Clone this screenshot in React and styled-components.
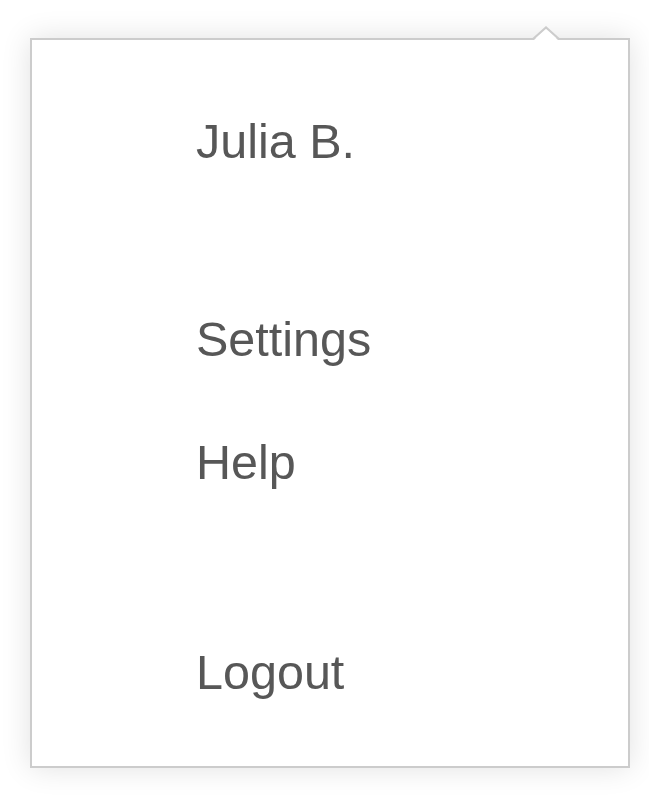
import React from "react";
import styled, { createGlobalStyle } from "styled-components";

const GlobalStyle = createGlobalStyle`
  html, body {
    margin: 0;
    padding: 0;
    background: #fff;
  }
  body {
    font-family: "Liberation Sans", Arial, Helvetica, sans-serif;
  }
`;

const Page = styled.div`
  padding: 38px 19px 30px 30px;
`;

const Popover = styled.nav`
  position: relative;
  box-sizing: border-box;
  width: 600px;
  border: 2px solid #cccccc;
  background: #fff;
  box-shadow: 0 0 28px rgba(0, 0, 0, 0.12);
  padding: 39px 0 33px 164px;
`;

const Caret = styled.svg`
  position: absolute;
  top: -14px;
  right: 69px;
  width: 26px;
  height: 14px;
  overflow: visible;
`;

const Section = styled.ul`
  list-style: none;
  margin: ${(props) => props.$gap || 0}px 0 0;
  padding: 0;
`;

const Item = styled.li`
  padding: 33.5px 0;
  font-size: 48.5px;
  line-height: 56px;
  color: #575757;
  cursor: ${(props) => (props.$static ? "default" : "pointer")};
`;

const sections = [
  { gap: 0, items: [{ label: "Julia B.", isStatic: true }] },
  { gap: 75, items: [{ label: "Settings" }, { label: "Help" }] },
  { gap: 87, items: [{ label: "Logout" }] },
];

export default function App() {
  return (
    <Page>
      <GlobalStyle />
      <Popover>
        <Caret viewBox="0 0 26 14">
          <polygon points="1,14 13,2 25,14" fill="#fff" />
          <polyline
            points="0,13 13,1.4 26,13"
            fill="none"
            stroke="#cccccc"
            strokeWidth="2"
          />
        </Caret>
        {sections.map((section, i) => (
          <Section key={i} $gap={section.gap}>
            {section.items.map((item) => (
              <Item key={item.label} $static={item.isStatic}>
                {item.label}
              </Item>
            ))}
          </Section>
        ))}
      </Popover>
    </Page>
  );
}
